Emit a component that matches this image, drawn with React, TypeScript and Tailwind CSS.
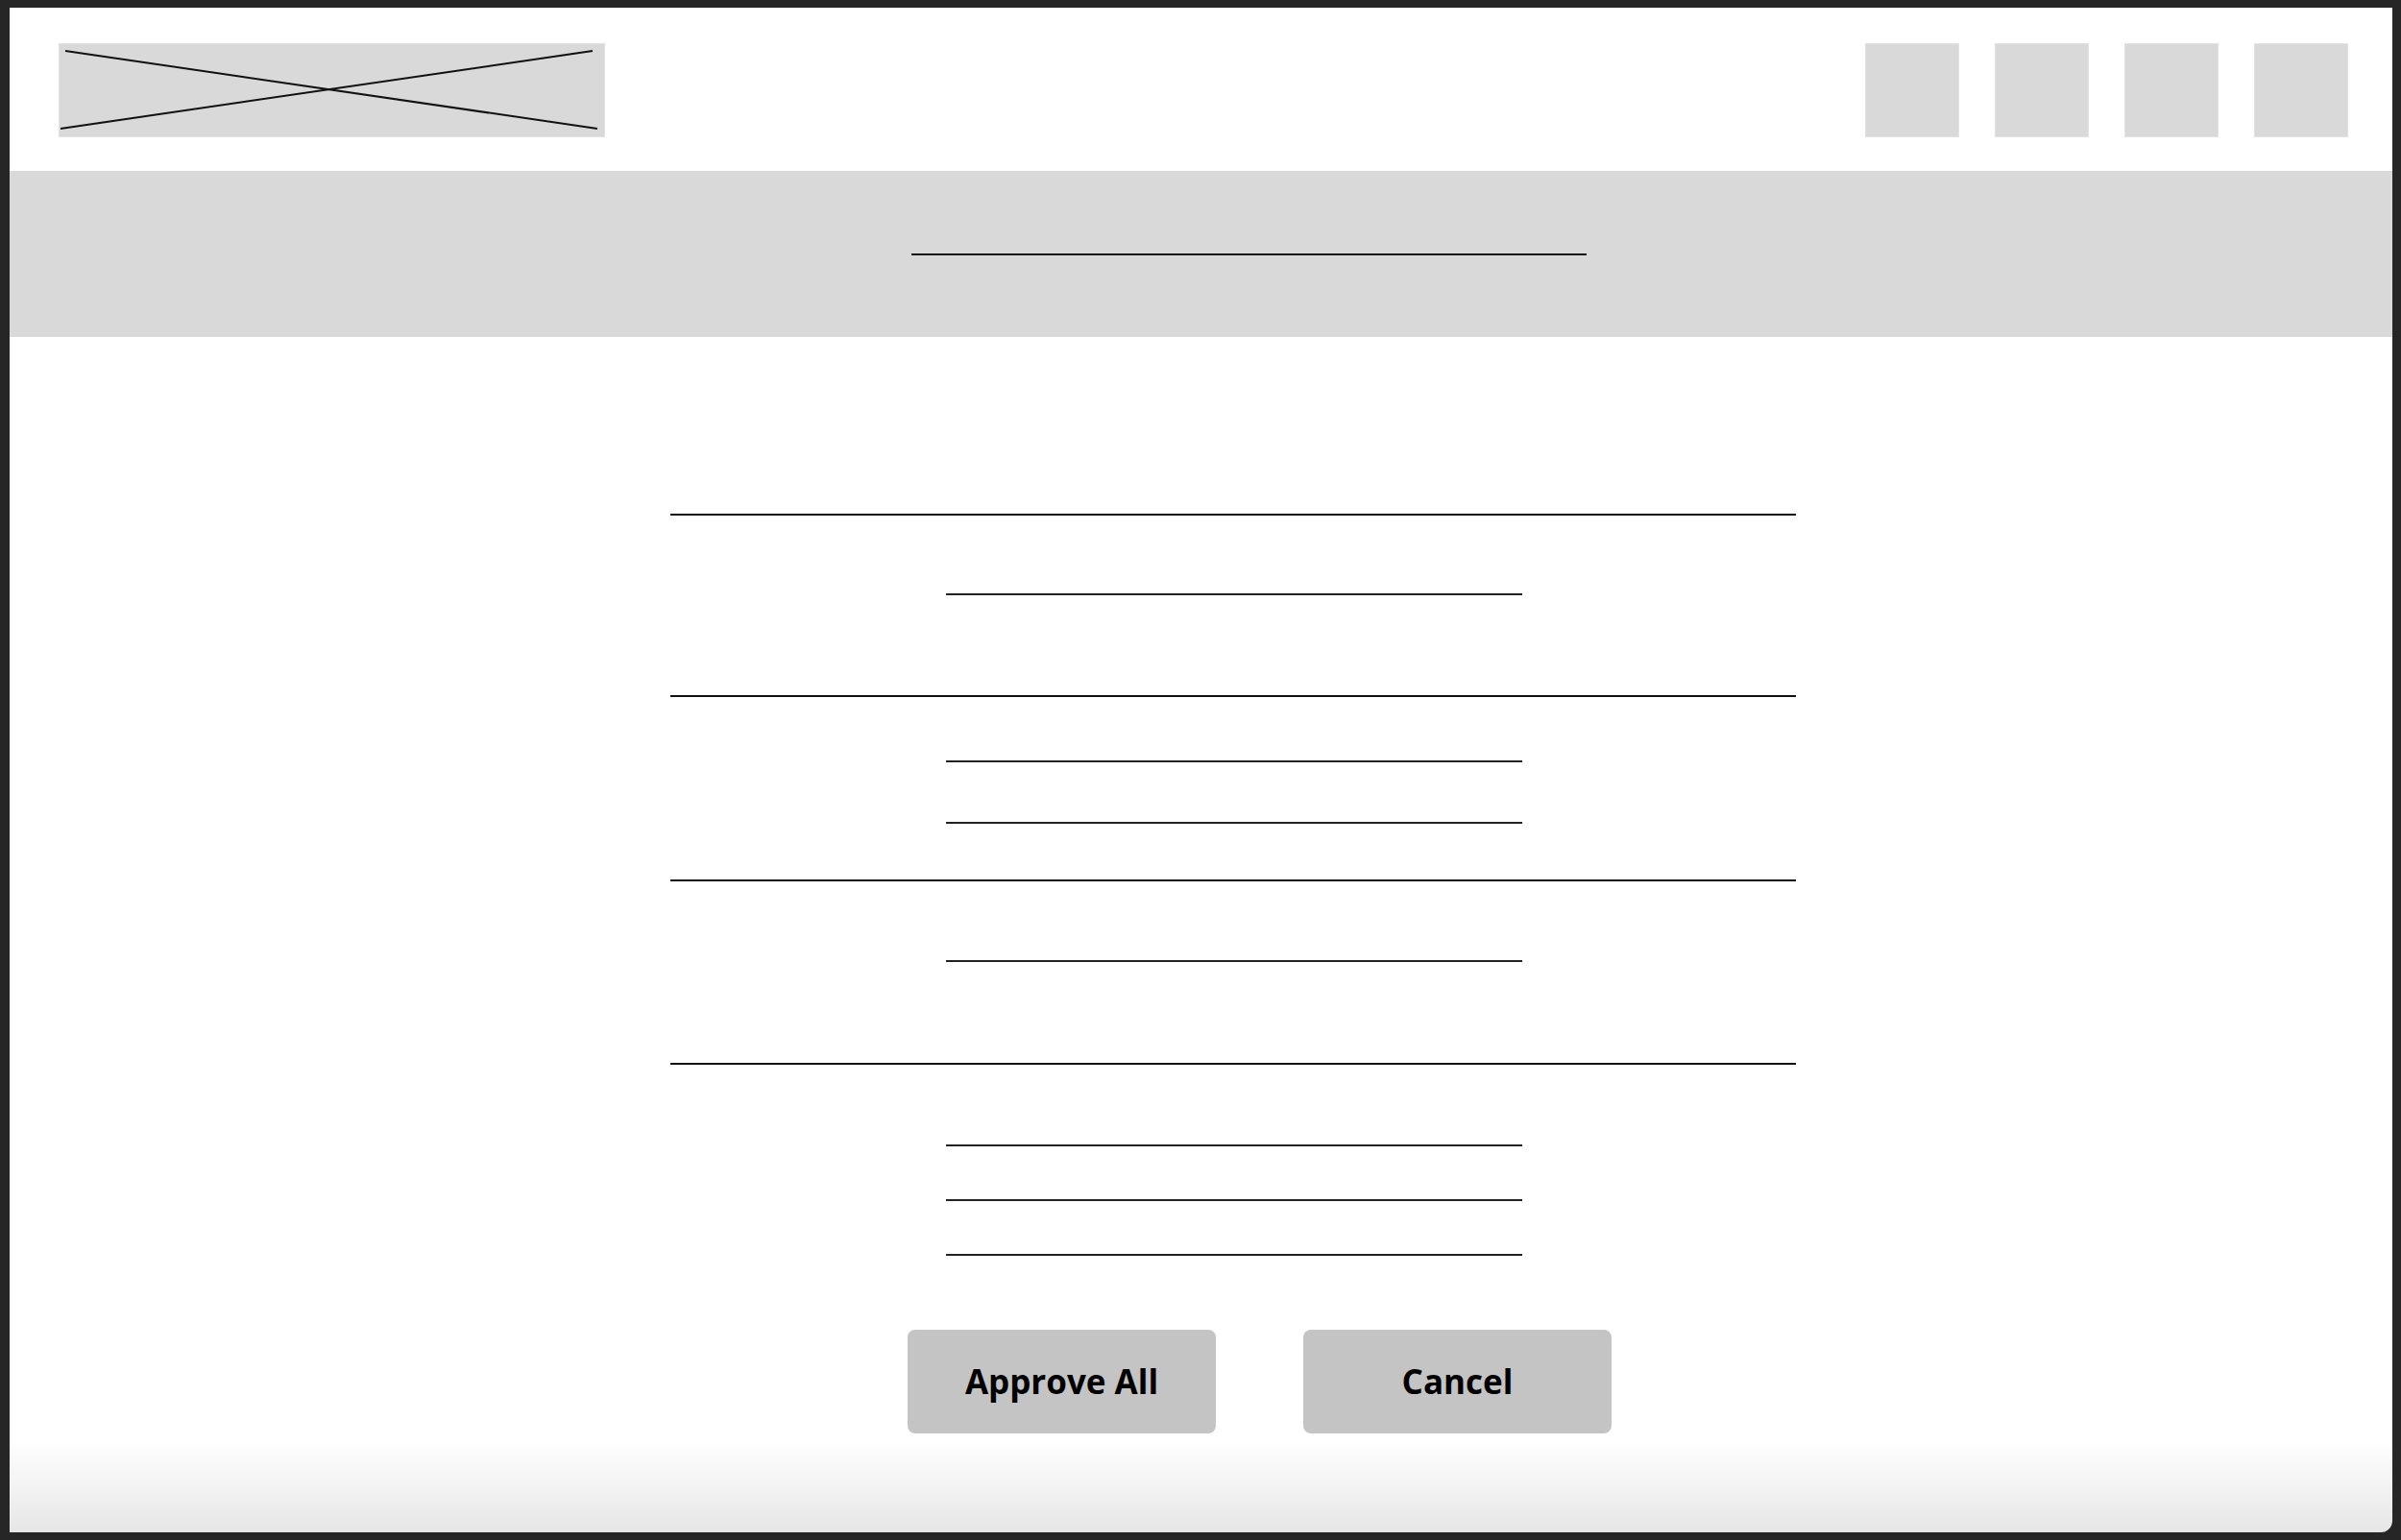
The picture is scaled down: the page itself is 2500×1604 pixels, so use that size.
import React from "react";

const LongLine = ({ className }: { className: string }) => (
  <div className={`h-[2px] w-[1172px] bg-[#111] ${className}`} />
);

const ShortLine = ({ className }: { className: string }) => (
  <div className={`ml-[287px] h-[2px] w-[600px] bg-[#222] ${className}`} />
);

const NavBox = () => <div className="h-[98px] w-[98px] bg-[#d9d9d9] border border-[#e2e2e2]" />;

const ActionButton = ({ label }: { label: string }) => (
  <button className="flex h-[108px] w-[321px] items-center justify-center rounded-[8px] bg-[#c4c4c4] text-[35px] font-bold text-black font-['Open_Sans',sans-serif]">
    {label}
  </button>
);

export default function App() {
  return (
    <div className="flex h-[1604px] w-[2500px] flex-col bg-[#262626] pt-[8px] pl-[10px] pr-[9px] pb-[8px]">
      <div className="flex flex-1 flex-col rounded-br-[12px] bg-linear-to-b from-white from-[94%] to-[#e6e6e6]">
        {/* header */}
        <div className="flex h-[170px] items-start justify-between pt-[37px] pl-[51px] pr-[46px]">
          <div className="h-[98px] w-[569px] bg-[#d9d9d9] border border-[#e2e2e2]">
            <svg viewBox="0 0 569 98" width="569" height="98" className="block">
              <line x1="6" y1="7" x2="560" y2="88" stroke="#111" strokeWidth="2" />
              <line x1="1" y1="88" x2="555" y2="7" stroke="#111" strokeWidth="2" />
            </svg>
          </div>
          <div className="flex gap-[37px]">
            <NavBox />
            <NavBox />
            <NavBox />
            <NavBox />
          </div>
        </div>

        {/* title banner */}
        <div className="flex h-[173px] items-center bg-[#d9d9d9]">
          <div className="ml-[939px] h-[2px] w-[703px] bg-[#111]" />
        </div>

        {/* content */}
        <div className="ml-[688px] flex flex-col">
          <LongLine className="mt-[184px]" />
          <ShortLine className="mt-[81px]" />

          <LongLine className="mt-[104px]" />
          <ShortLine className="mt-[66px]" />
          <ShortLine className="mt-[62px]" />

          <LongLine className="mt-[58px]" />
          <ShortLine className="mt-[82px]" />

          <LongLine className="mt-[105px]" />
          <ShortLine className="mt-[83px]" />
          <ShortLine className="mt-[55px]" />
          <ShortLine className="mt-[55px]" />

          <div className="ml-[247px] mt-[77px] flex gap-[91px]">
            <ActionButton label="Approve All" />
            <ActionButton label="Cancel" />
          </div>
        </div>
      </div>
    </div>
  );
}
